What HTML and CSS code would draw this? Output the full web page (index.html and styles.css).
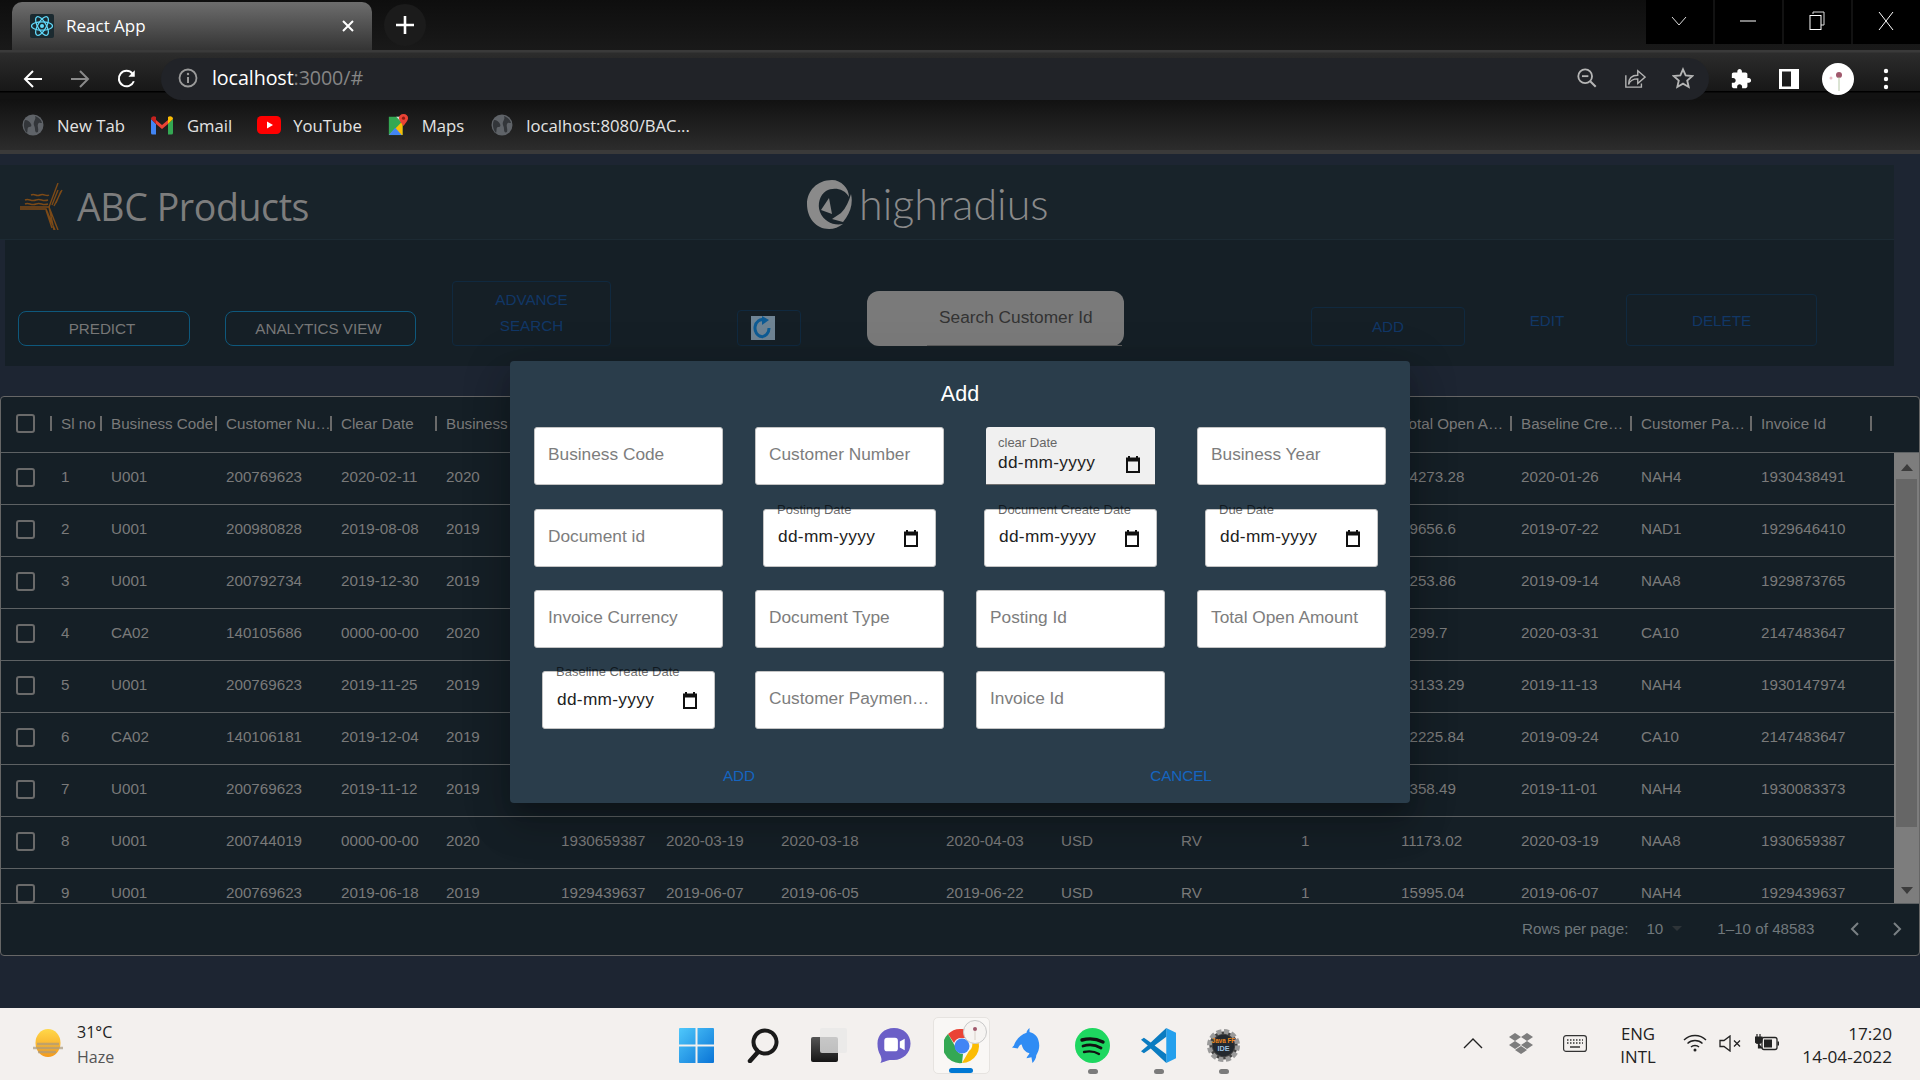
FILE: index.html
```html
<!DOCTYPE html>
<html lang="en">
<head>
<meta charset="utf-8">
<title>React App</title>
<link rel="stylesheet" href="styles.css">
</head>
<body>
<div class="tabstrip">
  <div class="tab">
    <svg class="favicon" viewBox="0 0 24 24"><rect width="24" height="24" rx="2" fill="#1b2a30"/><g fill="none" stroke="#61dafb" stroke-width="1.2"><ellipse cx="12" cy="12" rx="10.5" ry="4.2"/><ellipse cx="12" cy="12" rx="10.5" ry="4.2" transform="rotate(60 12 12)"/><ellipse cx="12" cy="12" rx="10.5" ry="4.2" transform="rotate(120 12 12)"/></g><circle cx="12" cy="12" r="2" fill="#61dafb"/></svg>
    <span class="tab-title">React App</span>
    <svg class="tab-close" viewBox="0 0 12 12"><path d="M1 1l10 10M11 1L1 11" stroke="#fff" stroke-width="2"/></svg>
  </div>
  <div class="newtab"><svg viewBox="0 0 18 18" width="18" height="18"><path d="M9 0v18M0 9h18" stroke="#fff" stroke-width="2.6"/></svg></div>
  <div class="winctl">
    <div class="winbtn"><svg viewBox="0 0 16 10" width="16" height="10"><path d="M1 1l7 8 7-8" fill="none" stroke="#ddd"/></svg></div>
    <div class="winbtn"><svg viewBox="0 0 16 2" width="16" height="2"><path d="M0 1h16" stroke="#fff"/></svg></div>
    <div class="winbtn"><svg viewBox="0 0 16 20" width="16" height="20"><path d="M4 3V1h11v13h-3" fill="none" stroke="#ddd"/><rect x="1" y="4.500" width="11" height="14" fill="none" stroke="#fff"/></svg></div>
    <div class="winbtn"><svg viewBox="0 0 16 20" width="16" height="20"><path d="M1 1l14 18M15 1L1 19" stroke="#fff"/></svg></div>
  </div>
</div>

<div class="toolbar">
  <svg class="nav-ico" viewBox="0 0 20 20"><path d="M19 10H2M10 2l-8 8 8 8" fill="none" stroke="#fff" stroke-width="2"/></svg>
  <svg class="nav-ico dim" viewBox="0 0 20 20"><path d="M1 10h17M10 2l8 8-8 8" fill="none" stroke="#8a8a8a" stroke-width="2"/></svg>
  <svg class="nav-ico" viewBox="0 0 22 22"><path d="M18.500 13.500A8.500 8.500 0 1 1 17 5" fill="none" stroke="#fff" stroke-width="2.200"/><path d="M19.500 1.500v7h-7z" fill="#fff"/></svg>
  <div class="omnibox">
    <svg class="info" viewBox="0 0 20 20"><circle cx="10" cy="10" r="8.500" fill="none" stroke="#9a9a9a" stroke-width="1.800"/><path d="M10 9v6" stroke="#9a9a9a" stroke-width="2"/><circle cx="10" cy="6" r="1.200" fill="#9a9a9a"/></svg>
    <span class="url">localhost<span class="url-dim">:3000/#</span></span>
    <span class="omni-right">
      <svg class="tool-ico" viewBox="0 0 24 24"><circle cx="10" cy="10" r="7.500" fill="none" stroke="#b5b5b5" stroke-width="2"/><path d="M6.500 10h7" stroke="#b5b5b5" stroke-width="2"/><path d="M15.500 15.500l6 6" stroke="#b5b5b5" stroke-width="2.200"/></svg>
      <svg class="tool-ico" viewBox="0 0 24 24"><path d="M2 9v13h17v-4" fill="none" stroke="#b5b5b5" stroke-width="1.500"/><path d="M5 19c0-7 4-10 10-10V4l8 7-8 7v-5c-5 0-8 1-10 6z" fill="none" stroke="#b5b5b5" stroke-width="1.500"/></svg>
      <svg class="tool-ico" viewBox="0 0 24 24"><path d="M12 2.500l2.900 6.700 7.100.7-5.400 4.800 1.600 7.100-6.200-3.700-6.200 3.700 1.600-7.100L2 9.900l7.100-.7z" fill="none" stroke="#b5b5b5" stroke-width="2"/></svg>
    </span>
  </div>
  <svg class="ext-ico" viewBox="0 0 24 24"><path d="M20.500 11H19V7c0-1.100-.9-2-2-2h-4V3.500C13 2.120 11.880 1 10.500 1S8 2.120 8 3.500V5H4c-1.100 0-1.990.9-1.990 2v3.800H3.500c1.490 0 2.700 1.210 2.700 2.700s-1.210 2.700-2.700 2.700H2V20c0 1.100.9 2 2 2h3.800v-1.500c0-1.490 1.210-2.700 2.700-2.700 1.490 0 2.700 1.210 2.700 2.700V22H17c1.100 0 2-.9 2-2v-4h1.500c1.380 0 2.500-1.120 2.500-2.500S21.880 11 20.500 11z" fill="#fff"/></svg>
  <svg class="ext-ico" viewBox="0 0 22 22"><path d="M1 1h20v20H1z M4 3.500v15h9v-15z" fill="#fff" fill-rule="evenodd"/></svg>
  <svg class="avatar" viewBox="0 0 32 32"><circle cx="16" cy="16" r="16" fill="#fff"/><circle cx="17" cy="12" r="3" fill="#a0586c"/><circle cx="9" cy="15" r="1.500" fill="#e8b9c4"/><path d="M17 14v14" stroke="#b7c8a8" stroke-width="1"/></svg>
  <svg class="menu-dots" viewBox="0 0 6 22"><circle cx="3" cy="3" r="2.200" fill="#fff"/><circle cx="3" cy="11" r="2.200" fill="#fff"/><circle cx="3" cy="19" r="2.200" fill="#fff"/></svg>
</div>

<div class="bookmarks">
  <div class="bm bm-newtab"><svg class="bm-ico" viewBox="0 0 22 22"><circle cx="11" cy="11" r="10.500" fill="#5f6368"/><path d="M3 6c3 0 5 2 6 4s0 3-2 3-1 4-2 6C2 16 1 10 3 6zM13 2c3 1 6 3 7 7-2 0-3-1-4 1s1 5 0 8c-2 1-3 0-3-3s-2-4-1-7 2-3 1-6z" fill="#33363a"/></svg><span>New Tab</span></div>
  <div class="bm bm-gmail"><svg class="bm-ico" viewBox="0 0 24 20"><path d="M1 4v14a1.500 1.500 0 0 0 1.500 1.500H6V9z" fill="#4285f4"/><path d="M23 4v14a1.500 1.500 0 0 1-1.500 1.500H18V9z" fill="#34a853"/><path d="M6 9v10.500h0L6 5l6 5 6-5v4l-6 5z" fill="#ea4335"/><path d="M1 4c0-2.500 3-3.500 5-2v7z" fill="#c5221f"/><path d="M18 2c2-1.500 5-.5 5 2l-5 5z" fill="#fbbc04"/></svg><span>Gmail</span></div>
  <div class="bm bm-yt"><svg class="bm-ico" viewBox="0 0 24 18"><rect width="24" height="18" rx="4.500" fill="#f00"/><path d="M10 5.500l6 3.500-6 3.500z" fill="#fff"/></svg><span>YouTube</span></div>
  <div class="bm bm-maps"><svg class="bm-ico" viewBox="0 0 22 24"><path d="M1 3h15v20H1z" fill="#34a853"/><path d="M1 23l15-15v15z" fill="#fbbc04"/><path d="M1 23l7-8 7 8z" fill="#4285f4"/><path d="M9 3h7v7z" fill="#d9d9d9"/><path d="M17 0c3 0 5 2 5 4.500S19 10 17 13c-2-3-5-6-5-8.500S14 0 17 0z" fill="#ea4335"/><circle cx="17" cy="4.500" r="1.700" fill="#8e1b12"/></svg><span>Maps</span></div>
  <div class="bm"><svg class="bm-ico" viewBox="0 0 22 22"><circle cx="11" cy="11" r="10.500" fill="#5f6368"/><path d="M3 6c3 0 5 2 6 4s0 3-2 3-1 4-2 6C2 16 1 10 3 6zM13 2c3 1 6 3 7 7-2 0-3-1-4 1s1 5 0 8c-2 1-3 0-3-3s-2-4-1-7 2-3 1-6z" fill="#33363a"/></svg><span>localhost:8080/BAC...</span></div>
</div>

<main class="app">
  <header class="brandbar">
    <div class="brand">
      <svg class="abc-logo" viewBox="0 0 44 47"><g fill="none" stroke="#7c4a17" stroke-width="1.400"><path d="M0 24h29l9 23M0 26h26l9 21M5 21c4-2 6 2 11 0s6 2 12 0M5 17c4-2 6 2 11 0s6 2 12 0M11 12c4-2 5 2 9 0s6 2 9 0M29 24L38 0M32 22l6-15M34 23l8-16M36 20l5-12M29 24l5 23M26 27l6 18"/></g></svg>
      <span class="abc-name">ABC Products</span>
    </div>
    <svg class="hr-mark" viewBox="0 0 45 49"><path d="M25 0C10 0 0 11 0 24c0 14 9 25 22 25 5 0 10-2 14-5-9 2-19-2-23-12-3-8 0-17 6-21 7-4 18-3 23 6C42 8 34 0 25 0z" fill="#8a8a8a"/><path d="M44 14c2 8 0 17-5 24l-3 4-11-3 9-6c5-5 8-12 10-19z" fill="#8a8a8a"/><path d="M14 30l8-12 3 16z" fill="#8a8a8a"/></svg>
    <span class="hr-name">highradius</span>
  </header>

  <section class="actions-bar">
    <button class="btn btn-predict">PREDICT</button>
    <button class="btn btn-analytics">ANALYTICS VIEW</button>
    <button class="btn btn-advance">ADVANCE<br>SEARCH</button>
    <div class="btn-refresh"><svg viewBox="0 0 24 24" width="24" height="24"><rect width="24" height="24" fill="#6f8494"/><path d="M18 12a7 8.500 0 1 1-5-8" fill="none" stroke="#0d5b94" stroke-width="3"/><path d="M11 0l7 4-7 5z" fill="#0d5b94"/></svg></div>
    <div class="search"><span>Search Customer Id</span></div>
    <button class="btn btn-add">ADD</button>
    <button class="btn btn-edit">EDIT</button>
    <button class="btn btn-delete">DELETE</button>
  </section>

  <section class="datagrid">
    <div class="row head">
      <div class="cell"><span class="check"></span></div>
      <div class="cell sep">Sl no</div><div class="cell sep">Business Code</div><div class="cell sep">Customer Nu…</div><div class="cell sep">Clear Date</div><div class="cell sep">Business Year</div><div class="cell sep">Document Id</div><div class="cell sep">Posting Date</div><div class="cell sep">Document Create…</div><div class="cell sep">Due Date</div><div class="cell sep">Invoice Curre…</div><div class="cell sep">Document Type</div><div class="cell sep">Posting Id</div><div class="cell sep">Total Open A…</div><div class="cell sep">Baseline Cre…</div><div class="cell sep">Customer Pa…</div><div class="cell sep">Invoice Id</div><div class="cell sep"></div>
    </div>
    <div class="grid-body">
      <div class="rows">
        <div class="row"><div class="cell"><span class="check"></span></div><div class="cell">1</div><div class="cell">U001</div><div class="cell">200769623</div><div class="cell">2020-02-11</div><div class="cell">2020</div><div class="cell"></div><div class="cell"></div><div class="cell"></div><div class="cell"></div><div class="cell"></div><div class="cell"></div><div class="cell"></div><div class="cell">14273.28</div><div class="cell">2020-01-26</div><div class="cell">NAH4</div><div class="cell">1930438491</div></div>
        <div class="row"><div class="cell"><span class="check"></span></div><div class="cell">2</div><div class="cell">U001</div><div class="cell">200980828</div><div class="cell">2019-08-08</div><div class="cell">2019</div><div class="cell"></div><div class="cell"></div><div class="cell"></div><div class="cell"></div><div class="cell"></div><div class="cell"></div><div class="cell"></div><div class="cell">19656.6</div><div class="cell">2019-07-22</div><div class="cell">NAD1</div><div class="cell">1929646410</div></div>
        <div class="row"><div class="cell"><span class="check"></span></div><div class="cell">3</div><div class="cell">U001</div><div class="cell">200792734</div><div class="cell">2019-12-30</div><div class="cell">2019</div><div class="cell"></div><div class="cell"></div><div class="cell"></div><div class="cell"></div><div class="cell"></div><div class="cell"></div><div class="cell"></div><div class="cell">1253.86</div><div class="cell">2019-09-14</div><div class="cell">NAA8</div><div class="cell">1929873765</div></div>
        <div class="row"><div class="cell"><span class="check"></span></div><div class="cell">4</div><div class="cell">CA02</div><div class="cell">140105686</div><div class="cell">0000-00-00</div><div class="cell">2020</div><div class="cell"></div><div class="cell"></div><div class="cell"></div><div class="cell"></div><div class="cell"></div><div class="cell"></div><div class="cell"></div><div class="cell">1299.7</div><div class="cell">2020-03-31</div><div class="cell">CA10</div><div class="cell">2147483647</div></div>
        <div class="row"><div class="cell"><span class="check"></span></div><div class="cell">5</div><div class="cell">U001</div><div class="cell">200769623</div><div class="cell">2019-11-25</div><div class="cell">2019</div><div class="cell"></div><div class="cell"></div><div class="cell"></div><div class="cell"></div><div class="cell"></div><div class="cell"></div><div class="cell"></div><div class="cell">13133.29</div><div class="cell">2019-11-13</div><div class="cell">NAH4</div><div class="cell">1930147974</div></div>
        <div class="row"><div class="cell"><span class="check"></span></div><div class="cell">6</div><div class="cell">CA02</div><div class="cell">140106181</div><div class="cell">2019-12-04</div><div class="cell">2019</div><div class="cell"></div><div class="cell"></div><div class="cell"></div><div class="cell"></div><div class="cell"></div><div class="cell"></div><div class="cell"></div><div class="cell">12225.84</div><div class="cell">2019-09-24</div><div class="cell">CA10</div><div class="cell">2147483647</div></div>
        <div class="row"><div class="cell"><span class="check"></span></div><div class="cell">7</div><div class="cell">U001</div><div class="cell">200769623</div><div class="cell">2019-11-12</div><div class="cell">2019</div><div class="cell"></div><div class="cell"></div><div class="cell"></div><div class="cell"></div><div class="cell"></div><div class="cell"></div><div class="cell"></div><div class="cell">1358.49</div><div class="cell">2019-11-01</div><div class="cell">NAH4</div><div class="cell">1930083373</div></div>
        <div class="row"><div class="cell"><span class="check"></span></div><div class="cell">8</div><div class="cell">U001</div><div class="cell">200744019</div><div class="cell">0000-00-00</div><div class="cell">2020</div><div class="cell">1930659387</div><div class="cell">2020-03-19</div><div class="cell">2020-03-18</div><div class="cell">2020-04-03</div><div class="cell">USD</div><div class="cell">RV</div><div class="cell">1</div><div class="cell">11173.02</div><div class="cell">2020-03-19</div><div class="cell">NAA8</div><div class="cell">1930659387</div></div>
        <div class="row"><div class="cell"><span class="check"></span></div><div class="cell">9</div><div class="cell">U001</div><div class="cell">200769623</div><div class="cell">2019-06-18</div><div class="cell">2019</div><div class="cell">1929439637</div><div class="cell">2019-06-07</div><div class="cell">2019-06-05</div><div class="cell">2019-06-22</div><div class="cell">USD</div><div class="cell">RV</div><div class="cell">1</div><div class="cell">15995.04</div><div class="cell">2019-06-07</div><div class="cell">NAH4</div><div class="cell">1929439637</div></div>
      </div>
      <div class="scrollbar">
        <svg class="sb-arrow" viewBox="0 0 12 7"><path d="M0 7l6-7 6 7z" fill="#3c3c3c"/></svg>
        <div class="sb-thumb"></div>
        <svg class="sb-arrow" viewBox="0 0 12 7"><path d="M0 0l6 7 6-7z" fill="#3c3c3c"/></svg>
      </div>
    </div>
    <div class="pager">
      <span class="pg-label">Rows per page:</span>
      <span class="pg-size">10</span>
      <svg class="pg-caret" viewBox="0 0 10 5"><path d="M0 0l5 5 5-5z" fill="#2e3438"/></svg>
      <span class="pg-range">1–10 of 48583</span>
      <svg class="pg-prev" viewBox="0 0 10 14"><path d="M8 1L2 7l6 6" fill="none" stroke="#7a8084" stroke-width="2"/></svg>
      <svg class="pg-next" viewBox="0 0 10 14"><path d="M2 1l6 6-6 6" fill="none" stroke="#7a8084" stroke-width="2"/></svg>
    </div>
  </section>

  <div class="modal">
    <h2 class="modal-title">Add</h2>
    <div class="form">
      <div class="field"><span class="ph">Business Code</span></div>
      <div class="field"><span class="ph">Customer Number</span></div>
      <div class="field date filled"><span class="lbl">clear Date</span><span class="dval">dd-mm-yyyy</span><svg class="cal" viewBox="0 0 14 17"><path d="M3 0v3M11 0v3" stroke="#111" stroke-width="2"/><rect x="1" y="2.500" width="12" height="13.500" fill="none" stroke="#111" stroke-width="2"/><path d="M1 3h12v2.500H1z" fill="#111"/></svg></div>
      <div class="field"><span class="ph">Business Year</span></div>

      <div class="field"><span class="ph">Document id</span></div>
      <div class="field date"><span class="lbl">Posting Date</span><span class="dval">dd-mm-yyyy</span><svg class="cal" viewBox="0 0 14 17"><path d="M3 0v3M11 0v3" stroke="#111" stroke-width="2"/><rect x="1" y="2.500" width="12" height="13.500" fill="none" stroke="#111" stroke-width="2"/><path d="M1 3h12v2.500H1z" fill="#111"/></svg></div>
      <div class="field date"><span class="lbl">Document Create Date</span><span class="dval">dd-mm-yyyy</span><svg class="cal" viewBox="0 0 14 17"><path d="M3 0v3M11 0v3" stroke="#111" stroke-width="2"/><rect x="1" y="2.500" width="12" height="13.500" fill="none" stroke="#111" stroke-width="2"/><path d="M1 3h12v2.500H1z" fill="#111"/></svg></div>
      <div class="field date"><span class="lbl">Due Date</span><span class="dval">dd-mm-yyyy</span><svg class="cal" viewBox="0 0 14 17"><path d="M3 0v3M11 0v3" stroke="#111" stroke-width="2"/><rect x="1" y="2.500" width="12" height="13.500" fill="none" stroke="#111" stroke-width="2"/><path d="M1 3h12v2.500H1z" fill="#111"/></svg></div>

      <div class="field"><span class="ph">Invoice Currency</span></div>
      <div class="field"><span class="ph">Document Type</span></div>
      <div class="field"><span class="ph">Posting Id</span></div>
      <div class="field"><span class="ph">Total Open Amount</span></div>

      <div class="field date"><span class="lbl">Baseline Create Date</span><span class="dval">dd-mm-yyyy</span><svg class="cal" viewBox="0 0 14 17"><path d="M3 0v3M11 0v3" stroke="#111" stroke-width="2"/><rect x="1" y="2.500" width="12" height="13.500" fill="none" stroke="#111" stroke-width="2"/><path d="M1 3h12v2.500H1z" fill="#111"/></svg></div>
      <div class="field"><span class="ph">Customer Paymen…</span></div>
      <div class="field"><span class="ph">Invoice Id</span></div>
    </div>
    <div class="modal-actions"><span>ADD</span><span>CANCEL</span></div>
  </div>
</main>

<footer class="taskbar">
  <div class="weather">
    <svg class="sun" viewBox="0 0 30 30"><defs><linearGradient id="sung" x1="0" y1="0" x2="0" y2="1"><stop offset="0" stop-color="#ffd84a"/><stop offset="1" stop-color="#f59a1b"/></linearGradient></defs><ellipse cx="15" cy="14" rx="12.500" ry="14" fill="url(#sung)"/><path d="M0 19h30M4 15h22M5 23h18" stroke="#a99a80" stroke-width="2.500" opacity=".7"/></svg>
    <div class="wx-text"><span class="wx-temp">31°C</span><span class="wx-cond">Haze</span></div>
  </div>
  <div class="apps">
    <svg class="app-ico ico-start" viewBox="0 0 35 35"><defs><linearGradient id="wing" x1="0" y1="0" x2="1" y2="1"><stop offset="0" stop-color="#4fc8fb"/><stop offset="1" stop-color="#0a74d6"/></linearGradient></defs><path d="M0 1a1 1 0 0 1 1-1h15.500v16.500H0zM18.500 0H34a1 1 0 0 1 1 1v15.500H18.500zM0 18.500h16.500V35H1a1 1 0 0 1-1-1zM18.500 18.500H35V34a1 1 0 0 1-1 1H18.500z" fill="url(#wing)"/></svg>
    <svg class="app-ico ico-search" viewBox="0 0 32 35"><circle cx="18" cy="14" r="11.500" fill="none" stroke="#1a1a1a" stroke-width="4" transform="rotate(15 18 14)"/><path d="M11 24l-8 9" stroke="#1a1a1a" stroke-width="4.500" stroke-linecap="round"/></svg>
    <svg class="app-ico ico-view" viewBox="0 0 36 34"><defs><linearGradient id="tv" x1="0" y1="0" x2="0" y2="1"><stop offset="0" stop-color="#555"/><stop offset="1" stop-color="#161616"/></linearGradient></defs><rect y="9" width="27" height="25" rx="2" fill="url(#tv)"/><rect x="9" width="27" height="25" rx="2" fill="#e8e8e8" opacity=".78"/></svg>
    <svg class="app-ico ico-chat" viewBox="0 0 34 36"><path d="M17 0c10 0 17 7 17 16 0 10-8 17-17 17-3 0-6 0-8 1-3 1-5 2-6 2 2-3 1-5 0-8-2-3-3-7-3-12C0 7 7 0 17 0z" fill="#6b5fc7"/><rect x="7" y="10" width="14" height="14" rx="3" fill="#fff"/><path d="M23 14l5-3v12l-5-3z" fill="#fff"/></svg>
    <div class="chrome-slot">
      <svg class="chrome-ico" viewBox="0 0 36 36"><path d="M18 1a17 17 0 0 1 15 9H18a8 8 0 0 0-8 5L4 6a17 17 0 0 1 14-5z" fill="#ea4335"/><path d="M33 10a17 17 0 0 1-15 25l7-12a8 8 0 0 0 0-13z" fill="#fbbc04"/><path d="M4 6l7 12a8 8 0 0 0 8 8l-1 9A17 17 0 0 1 4 6z" fill="#34a853"/><circle cx="18" cy="18" r="7.500" fill="#4285f4"/></svg>
      <svg class="chrome-badge" viewBox="0 0 24 24"><circle cx="12" cy="12" r="11.500" fill="#f6f4f2" stroke="#c8c8c8"/><circle cx="12" cy="9" r="2" fill="#a0586c"/><path d="M12 11v9" stroke="#d8d0c8"/></svg>
      <span class="run-active"></span>
    </div>
    <div class="app-slot slot-dolphin">
      <svg class="app-ico" viewBox="0 0 30 36"><path d="M18 0c-2 2-3 3-3 5C9 7 4 12 2 18l-2 2 6 1c1-2 2-4 4-4 1 5 4 8 8 9-1 2-3 4-3 5l5-1 1 6c2-2 4-5 4-8 3-5 4-10 2-16-1-4-5-7-9-8z" fill="#2f8cf4"/></svg>
    </div>
    <div class="app-slot slot-spotify">
      <svg class="app-ico" viewBox="0 0 35 35"><circle cx="17.500" cy="17.500" r="17.500" fill="#1ed760"/><g fill="none" stroke="#111" stroke-linecap="round"><path d="M7 12c7-2 15-1 21 2" stroke-width="3.400"/><path d="M8 18c6-2 13-1 18 2" stroke-width="2.800"/><path d="M9 24c5-1 10-1 15 2" stroke-width="2.300"/></g></svg>
      <span class="run-dot"></span>
    </div>
    <div class="app-slot slot-code">
      <svg class="app-ico" viewBox="0 0 36 36"><path d="M26 0l10 5v26l-10 5z" fill="#24a0ed"/><path d="M26 0L10 15 3 10l-3 2 7 6-7 6 3 2 7-5 16 15v-9L14 18 26 9z" fill="#0b7cc1"/></svg>
      <span class="run-dot"></span>
    </div>
    <div class="app-slot slot-java">
      <svg class="app-ico" viewBox="0 0 36 36"><circle cx="18" cy="18" r="14.500" fill="#444" stroke="#9a9a9a" stroke-width="5" stroke-dasharray="5 2.600"/><circle cx="18" cy="18" r="11" fill="#23282e"/><text x="18" y="15" class="java-t">Java FF</text><text x="18" y="24" class="java-t java-b">IDE</text></svg>
      <span class="run-dot"></span>
    </div>
  </div>
  <div class="tray">
    <svg class="tray-chev" viewBox="0 0 20 11"><path d="M1 10l9-9 9 9" fill="none" stroke="#222" stroke-width="1.400"/></svg>
    <svg class="tray-drop" viewBox="0 0 24 21"><path d="M6 0l6 4-6 4-6-4zM18 0l6 4-6 4-6-4zM6 8l6 4-6 4-6-4zM18 8l6 4-6 4-6-4zM12 13l6 4-6 4-6-4z" fill="#7d7d7d"/></svg>
    <svg class="tray-kbd" viewBox="0 0 24 17"><rect x=".6" y=".6" width="22.800" height="15.800" rx="2.500" fill="none" stroke="#333" stroke-width="1.200"/><path d="M4 5h16M4 8h16" stroke="#333" stroke-width="1.500" stroke-dasharray="1.500 1.500"/><path d="M7 12h10" stroke="#333" stroke-width="1.500"/></svg>
    <div class="tray-lang"><span>ENG</span><span>INTL</span></div>
    <svg class="tray-wifi" viewBox="0 0 24 18"><g fill="none" stroke="#222" stroke-width="1.400"><path d="M1 6c6-6 16-6 22 0"/><path d="M4.500 9.500c4-4 11-4 15 0"/><path d="M8 13c2-2 6-2 8 0"/></g><circle cx="12" cy="16" r="1.500" fill="#222"/></svg>
    <svg class="tray-vol" viewBox="0 0 23 17"><path d="M1 5.500h4L11 1v15l-6-4.500H1z" fill="none" stroke="#222" stroke-width="1.300"/><path d="M15 5.500l6 6M21 5.500l-6 6" stroke="#222" stroke-width="1.300"/></svg>
    <svg class="tray-batt" viewBox="0 0 24 18"><rect x="7" y="3.500" width="15" height="12" rx="2" fill="none" stroke="#222" stroke-width="1.300"/><rect x="9" y="5.500" width="8" height="8" fill="#222"/><path d="M22.500 7.500h1.500v4h-1.500z" fill="#222"/><path d="M2 0v3M5 0v3M0 3h7v3a3.500 3.500 0 0 1-7 0zM3.500 9v5h4" fill="#222" stroke="#222" stroke-width="1.200"/></svg>
    <div class="clock"><span>17:20</span><span>14-04-2022</span></div>
  </div>
</footer>
</body>
</html>
```

FILE: styles.css
```css
* { box-sizing: border-box; }
html, body { margin: 0; padding: 0; }
body {
  width: 1920px;
  height: 1080px;
  overflow: hidden;
  display: flex;
  flex-direction: column;
  font-family: "Liberation Sans", Arial, sans-serif;
  background: #1d2532;
  position: relative;
}

/* browser chrome */
.tabstrip {
  height: 50px;
  flex: none;
  display: flex;
  align-items: flex-start;
  background: linear-gradient(#0e0e0e, #191919);
  font-family: "Open Sans", sans-serif;
}
.tab {
  width: 360px;
  height: 48px;
  margin: 2px 0 0 12px;
  border-radius: 10px 10px 0 0;
  background: linear-gradient(#6d6d6d, #343434);
  display: flex;
  align-items: center;
  padding: 0 18px;
}
.favicon { width: 24px; height: 24px; flex: none; }
.tab-title { color: #fff; font-size: 17px; margin-left: 12px; flex: 1; margin-top: -1px; }
.tab-close { width: 12px; height: 12px; margin-right: 0; }
.newtab {
  width: 42px;
  height: 42px;
  margin: 4px 0 0 12px;
  border-radius: 50%;
  background: #1b1b1b;
  display: flex;
  align-items: center;
  justify-content: center;
}
.winctl {
  margin-left: auto;
  height: 44px;
  display: flex;
  gap: 2px;
  background: #121212;
}
.winbtn {
  width: 67px;
  background: #000;
  display: flex;
  align-items: center;
  justify-content: center;
  padding: 0 2px 2px 0;
}
.toolbar {
  height: 49px;
  flex: none;
  position: relative;
  z-index: 1;
  display: flex;
  align-items: center;
  padding: 8px 0 0 23px;
  background: linear-gradient(#3a3a3a 0, #3a3a3a 2px, #2c2c2c 3px, #171717 41px, #000 41px, #000 42px, #121212 43px);
}
.nav-ico { width: 20px; height: 20px; flex: none; margin-right: 27px; }
.nav-ico + .omnibox { margin-left: -3px; }
.omnibox {
  width: 1548px;
  height: 42px;
  border-radius: 21px;
  background: #212328;
  display: flex;
  align-items: center;
  padding: 0 0 0 17px;
  font-family: "Open Sans", sans-serif;
}
.info { width: 20px; height: 20px; flex: none; margin-top: -1px; }
.url { color: #fff; font-size: 19.700px; margin-left: 14px; margin-top: -2px; letter-spacing: -.1px; }
.url-dim { color: #858585; }
.omni-right { margin-left: auto; display: flex; gap: 26px; padding-right: 15px; margin-top: -1px; }
.tool-ico { width: 22px; height: 22px; }
.ext-ico { width: 22px; height: 22px; flex: none; margin-left: 21px; }
.toolbar .ext-ico + .ext-ico { margin-left: 26px; }
.avatar { width: 32px; height: 32px; flex: none; margin-left: 22px; }
.menu-dots { width: 6px; height: 22px; flex: none; margin-left: 29px; }
.bookmarks {
  height: 55px;
  flex: none;
  display: flex;
  align-items: center;
  padding: 1px 0 0 22px;
  border-bottom: 4px solid #3a3a3a;
  background: linear-gradient(#111, #2c2c2c);
  font-family: "Open Sans", sans-serif;
  font-size: 16.700px;
  color: #e4e4e4;
}
.bm { display: flex; align-items: center; gap: 13px; margin-right: 25px; }
.bm-ico { width: 22px; height: 22px; flex: none; }
.bm-gmail .bm-ico, .bm-yt .bm-ico { width: 24px; }
.bm-yt { gap: 12px; }
.bm-maps { gap: 13px; margin-right: 27px; }

/* app */
.app {
  flex: 1;
  padding-top: 11px;
  color: #7a7a7a;
  font-size: 15.200px;
}
.brandbar {
  width: 1894px;
  height: 75px;
  display: flex;
  align-items: center;
  padding-top: 5px;
  background: #18232a;
  border-bottom: 1px solid #1c2a33;
}
.brand { width: 807px; display: flex; align-items: center; padding: 3px 0 0 20px; }
.abc-logo { width: 44px; height: 47px; flex: none; }
.abc-name {
  margin-left: 13px;
  font-family: "Open Sans", sans-serif;
  font-size: 37.500px;
  color: #7d7d7d;
  letter-spacing: -.4px;
}
.hr-mark { width: 45px; height: 49px; flex: none; }
.hr-name {
  margin-left: 7px;
  font-family: "Lato", sans-serif;
  font-weight: 300;
  font-size: 43px;
  color: #8a8a8a;
  margin-top: -3px;
}
.actions-bar {
  margin-left: 5px;
  width: 1889px;
  height: 126px;
  background: #151f26;
  display: flex;
  align-items: flex-end;
  padding-bottom: 20px;
}
.btn {
  font: inherit;
  font-size: 15.200px;
  background: transparent;
  color: #777;
  border: 1px solid #0e587c;
  border-radius: 8px;
  height: 35px;
  padding: 0 4px 0 0;
  flex: none;
}
.btn-predict { width: 172px; margin-left: 13px; }
.btn-analytics { width: 191px; margin-left: 35px; }
.btn-advance, .btn-add, .btn-edit, .btn-delete {
  color: #113766;
  border-color: #10293f;
  border-radius: 4px;
}
.btn-advance { width: 159px; height: 65px; margin-left: 36px; line-height: 26px; padding: 0 0 2px; }
.btn-refresh {
  width: 64px;
  height: 36px;
  margin-left: 126px;
  border: 1px solid #10293f;
  border-radius: 4px;
  display: flex;
  justify-content: center;
  align-items: center;
  padding-right: 12px;
}
.search {
  position: relative;
  width: 257px;
  height: 55px;
  margin-left: 66px;
  background: #7a7a7a;
  border-radius: 12px;
  padding: 0 0 2px 72px;
  display: flex;
  align-items: center;
  color: #333;
  font-size: 17.300px;
}
.search::after {
  content: "";
  position: absolute;
  left: 60px;
  right: 2px;
  bottom: 0;
  height: 1px;
  background: #5c5c5c;
}
.btn-add { width: 154px; height: 39px; margin-left: 187px; padding: 0; }
.btn-edit { width: 114px; height: 52px; margin-left: 25px; border-color: transparent; padding: 0; }
.btn-delete { width: 191px; height: 52px; margin-left: 22px; padding: 0; }

/* data grid */
.datagrid {
  margin-top: 30px;
  width: 1920px;
  height: 560px;
  background: #151f26;
  border: 1px solid #666;
  border-radius: 4px;
  overflow: hidden;
  display: flex;
  flex-direction: column;
}
.row {
  display: grid;
  grid-template-columns: 49px 50px 115px 115px 105px 115px 105px 115px 165px 115px 120px 120px 100px 120px 120px 120px 120px;
  height: 52px;
  flex: none;
  border-bottom: 1px solid #5d6163;
  align-items: center;
}
.head { height: 56px; grid-template-columns: 49px 50px 115px 115px 105px 115px 105px 115px 165px 115px 120px 120px 100px 120px 120px 120px 120px 49px; }
.cell { padding: 0 0 5px 11px; white-space: nowrap; overflow: hidden; position: relative; height: 100%; display: flex; align-items: center; }
.head .cell { padding-bottom: 3px; }
.cell:first-child, .head .cell:first-child { padding: 0 0 3px 15px; }
.sep::before {
  content: "";
  position: absolute;
  left: 0;
  top: 50%;
  margin-top: -9px;
  width: 2px;
  height: 15px;
  background: #6a6a6a;
}
.check {
  width: 19px;
  height: 19px;
  border: 2px solid #6a6a6a;
  border-radius: 3px;
  flex: none;
}
.grid-body { height: 451px; flex: none; display: flex; overflow: hidden; border-bottom: 1px solid #5d6163; }
.rows { width: 1893px; flex: none; overflow: hidden; }
.scrollbar {
  width: 25px;
  flex: none;
  background: #7d7d7d;
  display: flex;
  flex-direction: column;
  align-items: center;
  padding-top: 11px;
}
.sb-arrow { width: 12px; height: 7px; flex: none; }
.sb-thumb { width: 21px; height: 348px; background: #666; margin: 8px 0 60px; flex: none; }
.pager {
  flex: 1;
  display: flex;
  align-items: center;
  color: #70787c;
  padding-bottom: 2px;
}
.pg-label { margin-left: 1521px; }
.pg-size { margin-left: 18px; }
.pg-caret { width: 10px; height: 5px; margin-left: 9px; }
.pg-range { margin-left: 35px; }
.pg-prev { width: 10px; height: 14px; margin-left: 36px; }
.pg-next { width: 10px; height: 14px; margin-left: 32px; }

/* modal */
.modal {
  position: absolute;
  left: 510px;
  top: 361px;
  width: 900px;
  height: 442px;
  padding: 0 8px;
  background: #2a3d4b;
  border-radius: 4px;
  box-shadow: 0 11px 15px -7px rgba(0,0,0,.2), 0 24px 38px 3px rgba(0,0,0,.14), 0 9px 46px 8px rgba(0,0,0,.12);
}
.modal-title {
  margin: 0;
  height: 66px;
  line-height: 66px;
  text-align: center;
  color: #fff;
  font-size: 21.500px;
  font-weight: 400;
}
.form {
  display: grid;
  grid-template-columns: repeat(4, 221px);
  grid-auto-rows: 81.400px;
  justify-items: center;
  padding-top: .2px;
}
.field {
  position: relative;
  width: 189px;
  height: 58px;
  background: #fff;
  border: 1px solid #c4c4c4;
  border-radius: 3px;
  padding-left: 13px;
  display: flex;
  align-items: center;
  font-size: 17.300px;
}
.ph { color: #7d7d7d; margin-top: -3px; white-space: nowrap; }
.date { width: 173px; padding-left: 14px; color: #222; }
.dval { color: #222; margin-top: -2px; letter-spacing: .3px; }
.cal { position: absolute; right: 17px; top: 20px; width: 14px; height: 17px; }
.lbl {
  position: absolute;
  left: 13px;
  top: -7px;
  font-size: 13px;
  line-height: 14px;
  color: rgba(0, 0, 0, .6);
  white-space: nowrap;
}
.filled {
  width: 169px;
  background: #f0f0f0;
  border: 0;
  border-bottom: 1px solid #6f6f6f;
  border-radius: 3px 3px 0 0;
  padding: 16px 0 0 12px;
}
.filled .lbl { top: 9px; left: 12px; color: #666; }
.filled .cal { right: 15px; top: 29px; }
.modal-actions {
  display: grid;
  grid-template-columns: repeat(2, 442px);
  justify-items: center;
  height: 48px;
  align-items: center;
  color: #1565c0;
  font-size: 15.200px;
  margin-top: -1px;
}

/* taskbar */
.taskbar {
  height: 72px;
  flex: none;
  background: #f3f0ee;
  position: relative;
  display: flex;
  align-items: center;
  font-family: "Open Sans", sans-serif;
  color: #222;
}
.weather { display: flex; align-items: center; width: 679px; padding-left: 33px; }
.sun { width: 30px; height: 30px; flex: none; }
.wx-text { margin-left: 14px; display: flex; flex-direction: column; font-size: 16px; line-height: 25px; margin-top: 2px; }
.wx-cond { color: #555; }
.apps { display: flex; align-items: center; height: 72px; }
.app-ico { height: 35px; display: block; flex: none; }
.ico-start { width: 35px; margin-top: 2px; }
.ico-search { width: 32px; margin-left: 33px; margin-top: 2px; }
.ico-view { width: 36px; height: 34px; margin-left: 32px; margin-top: 2px; }
.ico-chat { width: 34px; margin-left: 30px; margin-top: 2px; }
.chrome-slot {
  position: relative;
  width: 57px;
  height: 57px;
  margin: 2px 0 0 22px;
  background: #f9f7f5;
  border: 1px solid #e6e3e0;
  border-radius: 5px;
}
.chrome-ico { position: absolute; left: 10px; top: 10px; width: 36px; height: 36px; }
.chrome-badge { position: absolute; left: 29px; top: 2px; width: 24px; height: 24px; }
.run-active {
  position: absolute;
  left: 15px;
  bottom: 0;
  width: 24px;
  height: 5px;
  border-radius: 3px;
  background: #0078d4;
}
.app-slot { position: relative; margin-top: 2px; }
.run-dot {
  position: absolute;
  left: 50%;
  bottom: -11px;
  width: 10px;
  height: 5px;
  margin-left: -5px;
  border-radius: 3px;
  background: #7b7b7b;
}
.slot-dolphin { width: 30px; margin-left: 22px; }
.slot-spotify { width: 35px; margin-left: 33px; }
.slot-code { width: 36px; margin-left: 31px; }
.slot-java { width: 36px; margin-left: 29px; }
.java-t { font: 700 6.500px "Liberation Sans", sans-serif; fill: #f08a1d; text-anchor: middle; }
.java-b { fill: #9ec1e0; font-size: 7.500px; }
.tray { position: absolute; left: 0; top: 0; width: 100%; height: 72px; pointer-events: none; }
.tray svg, .tray-lang, .clock { position: absolute; }
.tray-chev { left: 1463px; top: 30px; width: 20px; height: 11px; }
.tray-drop { left: 1509px; top: 25px; width: 24px; height: 21px; }
.tray-kbd { left: 1563px; top: 27px; width: 24px; height: 17px; }
.tray-lang { left: 1608px; width: 60px; top: 14px; display: flex; flex-direction: column; align-items: center; font-size: 16.800px; line-height: 23px; }
.tray-wifi { left: 1683px; top: 26px; width: 24px; height: 18px; }
.tray-vol { left: 1719px; top: 27px; width: 23px; height: 17px; }
.tray-batt { left: 1755px; top: 26px; width: 24px; height: 18px; }
.clock { right: 28px; top: 14px; display: flex; flex-direction: column; align-items: flex-end; font-size: 17.200px; line-height: 23px; }
```
